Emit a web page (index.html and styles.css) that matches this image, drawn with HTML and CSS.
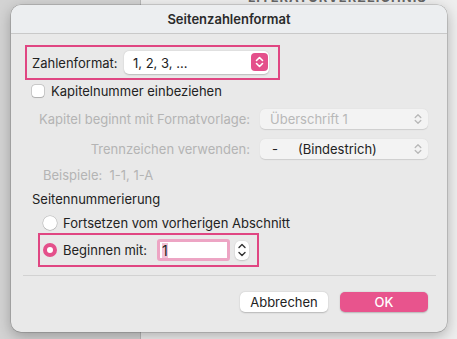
FILE: index.html
```html
<!DOCTYPE html>
<html lang="de">
<head>
    <meta charset="UTF-8">
    <meta name="viewport" content="width=device-width, initial-scale=1.0">
    <title>Seitenzahlenformat</title>
    <link rel="stylesheet" href="styles.css">
</head>
<body>
    <div class="doc-heading">LITERATURVERZEICHNIS</div>
    <div class="dialog">
        <div class="titlebar">Seitenzahlenformat</div>
        <div class="content">
            <div class="highlight format-box">
                <span class="label">Zahlenformat:</span>
                <div class="select active">
                    <span>1, 2, 3, ...</span>
                    <span class="stepper-pink">
                        <svg width="9" height="12" viewBox="0 0 9 12"><path d="M1.5 4.5 L4.5 1.5 L7.5 4.5 M1.5 7.5 L4.5 10.5 L7.5 7.5" fill="none" stroke="#fff" stroke-width="1.6" stroke-linecap="round" stroke-linejoin="round"/></svg>
                    </span>
                </div>
            </div>

            <label class="check-row">
                <span class="checkbox"></span>
                <span>Kapitelnummer einbeziehen</span>
            </label>

            <div class="field-row first">
                <span class="field-label">Kapitel beginnt mit Formatvorlage:</span>
                <div class="select disabled">
                    <span class="muted">Überschrift 1</span>
                    <svg class="chev" width="8" height="12" viewBox="0 0 8 12"><path d="M1.2 4.5 L4 1.7 L6.8 4.5 M1.2 7.5 L4 10.3 L6.8 7.5" fill="none" stroke="#b8b8b8" stroke-width="1.3" stroke-linecap="round" stroke-linejoin="round"/></svg>
                </div>
            </div>

            <div class="field-row">
                <span class="field-label">Trennzeichen verwenden:</span>
                <div class="select disabled">
                    <span class="dash">-</span><span>(Bindestrich)</span>
                    <svg class="chev" width="8" height="12" viewBox="0 0 8 12"><path d="M1.2 4.5 L4 1.7 L6.8 4.5 M1.2 7.5 L4 10.3 L6.8 7.5" fill="none" stroke="#b8b8b8" stroke-width="1.3" stroke-linecap="round" stroke-linejoin="round"/></svg>
                </div>
            </div>

            <div class="examples">Beispiele:&nbsp;&nbsp;1-1, 1-A</div>

            <div class="section-title">Seitennummerierung</div>

            <label class="radio-row">
                <span class="radio"></span>
                <span>Fortsetzen vom vorherigen Abschnitt</span>
            </label>

            <div class="highlight start-box">
                <span class="radio checked"></span>
                <span class="start-label">Beginnen mit:</span>
                <div class="number-input"><span class="sel">1</span></div>
                <div class="stepper">
                    <svg width="10" height="16" viewBox="0 0 10 16"><path d="M2 5.5 L5 2.5 L8 5.5 M2 10.5 L5 13.5 L8 10.5" fill="none" stroke="#333" stroke-width="1.4" stroke-linecap="round" stroke-linejoin="round"/></svg>
                </div>
            </div>

            <div class="separator"></div>

            <div class="buttons">
                <button class="btn">Abbrechen</button>
                <button class="btn primary">OK</button>
            </div>
        </div>
    </div>
</body>
</html>
```

FILE: styles.css
```css
body {
    margin: 0;
    width: 457px;
    height: 339px;
    overflow: hidden;
    font-family: Inter, "Liberation Sans", sans-serif;
    font-size: 13px;
    color: #222;
    background: linear-gradient(to right, #d3d3d3 0, #d3d3d3 140px, #b9b9b9 140px, #b9b9b9 141px, #eeeeee 141px);
    position: relative;
    padding-top: 5px;
    box-sizing: border-box;
}
.doc-heading {
    position: absolute;
    top: -11px;
    left: 248px;
    font-weight: 700;
    font-size: 13px;
    letter-spacing: 1px;
    color: #666;
}
.dialog {
    position: relative;
    margin-left: 11px;
    width: 436px;
    height: 327px;
    background: #e9e9e9;
    border-radius: 10px;
    box-shadow: 0 0 0 0.5px rgba(0,0,0,0.25), 0 4px 14px rgba(0,0,0,0.28);
    overflow: hidden;
}
.titlebar {
    height: 28px;
    line-height: 28px;
    background: #eceef0;
    border-bottom: 1px solid #c9c9c9;
    text-align: center;
    font-weight: 600;
    color: #2a2a2a;
}
.content {
    padding: 0 19px 0 14px;
}
.highlight {
    border: 2px solid #e04682;
    box-sizing: border-box;
    display: flex;
    align-items: center;
}
.format-box {
    margin-top: 11px;
    width: 255px;
    height: 35px;
    padding-left: 5px;
}
.label {
    width: 92px;
}
.select {
    height: 20px;
    border-radius: 5px;
    background: #fff;
    box-shadow: 0 0.5px 1.5px rgba(0,0,0,0.2);
    display: flex;
    align-items: center;
    box-sizing: border-box;
    position: relative;
}
.select.active {
    width: 145px;
    height: 23px;
    padding-left: 9px;
}
.stepper-pink {
    position: absolute;
    right: 1px;
    top: 2px;
    width: 17px;
    height: 18px;
    border-radius: 4px;
    background: #e4508b;
    display: flex;
    align-items: center;
    justify-content: center;
}
.check-row {
    margin-top: 3px;
    margin-left: 7px;
    height: 16px;
    display: flex;
    align-items: center;
}
.checkbox {
    width: 12px;
    height: 12px;
    border-radius: 3px;
    background: #fff;
    box-shadow: 0 0 0 0.5px rgba(0,0,0,0.25), 0 0.5px 1px rgba(0,0,0,0.15);
    margin-right: 7px;
}
.field-row {
    margin-top: 10px;
    height: 20px;
    display: flex;
    align-items: center;
}
.field-row.first {
    margin-top: 10px;
}
.field-label {
    width: 225px;
    text-align: right;
    color: #b4b4b4;
    margin-right: 10px;
}
.select.disabled {
    width: 168px;
    padding-left: 10px;
    background: #f3f3f3;
    box-shadow: 0 0.5px 1px rgba(0,0,0,0.12);
}
.muted {
    color: #b8b8b8;
}
.dash {
    width: 26px;
    padding-left: 2px;
}
.chev {
    position: absolute;
    right: 6px;
    top: 4px;
}
.examples {
    margin-top: 8px;
    margin-left: 18px;
    height: 16px;
    line-height: 16px;
    color: #b4b4b4;
}
.section-title {
    margin-top: 8px;
    margin-left: 7px;
    height: 16px;
    line-height: 16px;
}
.radio-row {
    margin-top: 8px;
    margin-left: 18px;
    height: 16px;
    display: flex;
    align-items: center;
}
.radio {
    width: 14px;
    height: 14px;
    border-radius: 50%;
    background: #fff;
    box-shadow: 0 0 0 0.5px rgba(0,0,0,0.22), 0 0.5px 1px rgba(0,0,0,0.15);
    margin-right: 6px;
    box-sizing: border-box;
    flex-shrink: 0;
}
.radio.checked {
    background: #fff;
    border: 4px solid #e4508b;
    box-shadow: none;
}
.start-box {
    margin-top: 2px;
    margin-left: 13px;
    width: 221px;
    height: 34px;
    padding-left: 3px;
}
.start-label {
    width: 94px;
}
.number-input {
    width: 73px;
    height: 22px;
    box-sizing: border-box;
    background: #fff;
    border: 3px solid #eda5c4;
    border-radius: 3px;
    padding-left: 2px;
    display: flex;
    align-items: center;
    font-size: 14px;
}
.sel {
    background: #f3c2d7;
    line-height: 15px;
}
.stepper {
    margin-left: 5px;
    width: 14px;
    height: 19px;
    border-radius: 5px;
    background: #fff;
    box-shadow: 0 0.5px 1.5px rgba(0,0,0,0.25);
    display: flex;
    align-items: center;
    justify-content: center;
}
.separator {
    margin-top: 8px;
    margin-left: -2px;
    width: 413px;
    height: 1px;
    background: #d2d2d2;
}
.buttons {
    margin-top: 16px;
    display: flex;
    justify-content: flex-end;
    gap: 12px;
}
.btn {
    width: 88px;
    height: 20px;
    border: none;
    border-radius: 5px;
    background: #fff;
    box-shadow: 0 0.5px 1.5px rgba(0,0,0,0.22);
    font-family: Inter, "Liberation Sans", sans-serif;
    font-size: 13px;
    color: #222;
    padding: 0;
}
.btn.primary {
    background: #e8548d;
    color: #fff;
    font-weight: 500;
}
```
